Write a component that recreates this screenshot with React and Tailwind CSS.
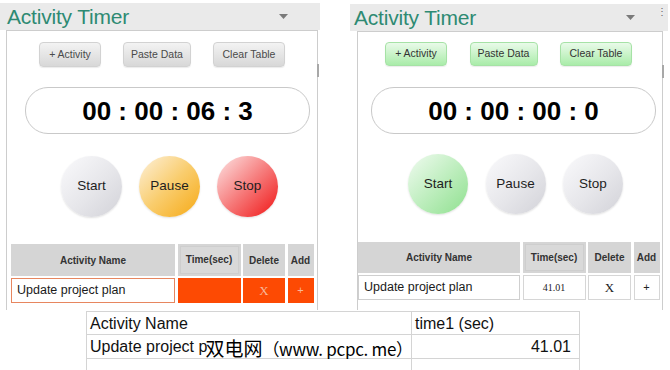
import React from 'react';

const ui = { fontFamily: '"Liberation Sans", Arial, sans-serif' };

const panels = {
    off: {
        wrap: 'w-[320px] pt-[3px]',
        titleBar: 'h-[27px] pl-[7px] pr-[32px]',
        body: 'ml-[6px] w-[312px] h-[280px]',
        btnRow: 'mt-[11px] ml-[32px] gap-[22px]',
        btnHeight: 'h-[25px]',
        btn: 'bg-linear-to-b from-[#f3f3f3] to-[#d8d8d8] border-[#d2d2d2] text-[#4a4a4a]',
        timer: 'mt-[20px] ml-[18px]',
        time: '00 : 00 : 06 : 3',
        circles: 'mt-[22px] ml-[54px] gap-[17px]',
        circleSize: 'w-[61px] h-[61px]',
        start: 'bg-[linear-gradient(135deg,#fafafc_0%,#e6e6ea_55%,#d2d2d8_100%)]',
        pause: 'bg-[linear-gradient(135deg,#fdf1dc_0%,#f9cd6e_50%,#f6a915_100%)]',
        stop: 'bg-[linear-gradient(135deg,#fde6e6_0%,#f67c7c_50%,#f01414_100%)]',
        table: 'mt-[27px] ml-[4px]',
        cols: 'grid-cols-[164px_63px_42px_26px] gap-x-[2.5px]',
        headH: 'h-[32px]',
        rowH: 'h-[25px]',
        nameCell: 'border-[#e7865f] bg-white',
        cell: 'bg-[#fd4a03] text-[#f7b89a]',
        timeValue: '',
    },
    on: {
        wrap: 'w-[318px] pt-[4px]',
        titleBar: 'h-[27px] pl-[4px] pr-[33px]',
        body: 'ml-[7px] w-[306px] h-[279px]',
        btnRow: 'mt-[10px] ml-[27px] gap-[22.5px]',
        btnHeight: 'h-[24px]',
        btn: 'bg-linear-to-b from-[#e9fae9] to-[#a9eca9] border-[#a6e2a6] text-[#333]',
        timer: 'mt-[21px] ml-[13px]',
        time: '00 : 00 : 00 : 0',
        circles: 'mt-[20px] ml-[50px] gap-[17.5px]',
        circleSize: 'w-[60px] h-[60px]',
        start: 'bg-[linear-gradient(135deg,#f1fbf1_0%,#bfeebf_50%,#8fe08f_100%)]',
        pause: 'bg-[linear-gradient(135deg,#fafafc_0%,#e6e6ea_55%,#d2d2d8_100%)]',
        stop: 'bg-[linear-gradient(135deg,#fafafc_0%,#e6e6ea_55%,#d2d2d8_100%)]',
        table: 'mt-[28px] ml-0',
        cols: 'grid-cols-[162px_63px_43px_26px] gap-x-[2.5px]',
        headH: 'h-[31px]',
        rowH: 'h-[25px]',
        nameCell: 'border-[#cfcfcf] bg-white',
        cell: 'bg-white border border-[#d6d6d6] text-[#222]',
        timeValue: '41.01',
    },
};

const Caret = () => (
    <svg width="9" height="5" viewBox="0 0 9 5"><path d="M0 0h9L4.5 5z" fill="#7a7a7a" /></svg>
);

const Panel = ({ v, dots }) => {
    const p = panels[v];
    return (
        <div className={`${p.wrap} relative`} style={ui}>
            <div className={`${p.titleBar} bg-[#eaeaea] flex items-center justify-between`}>
                <span className="text-[21px] leading-none text-[#2e8a73] tracking-[-0.2px]">Activity Timer</span>
                <Caret />
            </div>
            {dots && <span className="absolute right-[1px] top-[7px] text-[10px] leading-none text-[#666]">⋮</span>}
            <div className={`${p.body} relative border border-b-0 border-[#cdcdcd] bg-white`}>
                <div className="absolute right-[-2px] top-[33px] w-[2px] h-[13px] bg-[#a8a8a8]" />
                <div className={`${p.btnRow} flex`}>
                    {[['+ Activity', 'w-[62px]'], ['Paste Data', 'w-[68px]'], ['Clear Table', 'w-[72px]']].map(([t, w]) => (
                        <div key={t} className={`${w} ${p.btnHeight} ${p.btn} border rounded-[4px] shadow-[0_1px_1px_rgba(0,0,0,0.08)] flex items-center justify-center text-[10.5px]`}>{t}</div>
                    ))}
                </div>
                <div className={`${p.timer} w-[285px] h-[47px] rounded-[23px] border border-[#c9c9c9] flex items-center justify-center`}>
                    <span className="text-[26px] font-bold text-black leading-none">{p.time}</span>
                </div>
                <div className={`${p.circles} flex`}>
                    {[['Start', p.start], ['Pause', p.pause], ['Stop', p.stop]].map(([t, bg]) => (
                        <div key={t} className={`${p.circleSize} ${bg} rounded-full flex items-center justify-center text-[13.5px] text-[#1e1e1e] shadow-[0_1px_2px_rgba(0,0,0,0.12)]`}>{t}</div>
                    ))}
                </div>
                <div className={`${p.table}`}>
                    <div className={`grid ${p.cols} ${p.headH} text-[10px] font-bold text-[#333]`}>
                        <div className="bg-[#d5d5d5] flex items-center justify-center">Activity Name</div>
                        <div className="bg-[#d5d5d5] p-[2px]">
                            <div className="h-full bg-[#d9d9d9] border border-[#cecece] flex items-start justify-center pt-[5px]">Time(sec)</div>
                        </div>
                        <div className="bg-[#d5d5d5] flex items-center justify-center">Delete</div>
                        <div className="bg-[#d5d5d5] flex items-center justify-center">Add</div>
                    </div>
                    <div className={`grid ${p.cols} ${p.rowH} mt-[2px]`}>
                        <div className={`${p.nameCell} border flex items-center pl-[5px] text-[12.5px] text-[#1a1a1a]`}>Update project plan</div>
                        <div className={`${p.cell} flex items-center justify-center text-[10px] text-[#222]`} style={{ fontFamily: '"Liberation Serif", serif' }}>{p.timeValue}</div>
                        <div className={`${p.cell} flex items-center justify-center text-[13px]`} style={{ fontFamily: '"Liberation Serif", serif' }}>X</div>
                        <div className={`${p.cell} flex items-center justify-center text-[11px]`}>+</div>
                    </div>
                </div>
            </div>
        </div>
    );
};

export default function App() {
    return (
        <div className="w-[670px] h-[370px] overflow-hidden bg-white relative">
            <div className="flex h-[311px] gap-[30px]">
                <Panel v="off" />
                <Panel v="on" dots />
            </div>
            <div className="ml-[86px] w-[494px] border-l border-r border-[#d4d4d4] text-[16px] text-[#111]" style={ui}>
                <div className="grid grid-cols-[325px_168px] h-[23px] border-t border-[#d4d4d4]">
                    <div className="border-r border-[#d4d4d4] pl-[3px] flex items-center">Activity Name</div>
                    <div className="pl-[3px] flex items-center">time1 (sec)</div>
                </div>
                <div className="grid grid-cols-[325px_168px] h-[24px] border-t border-[#d4d4d4]">
                    <div className="border-r border-[#d4d4d4] pl-[3px] flex items-center whitespace-nowrap overflow-hidden">
                        <span>Update project p</span>
                        <span className="ml-[-2px] text-[19px] leading-none text-black" style={{ fontFamily: '"Noto Sans CJK SC", sans-serif' }}>
                            双电网<span className="text-[17px] tracking-[-0.3px]">（www. pcpc. me）</span>
                        </span>
                    </div>
                    <div className="pr-[9px] flex items-center justify-end">41.01</div>
                </div>
                <div className="grid grid-cols-[325px_168px] h-[24px] border-t border-[#d4d4d4]">
                    <div className="border-r border-[#d4d4d4]" />
                    <div />
                </div>
            </div>
        </div>
    );
}
